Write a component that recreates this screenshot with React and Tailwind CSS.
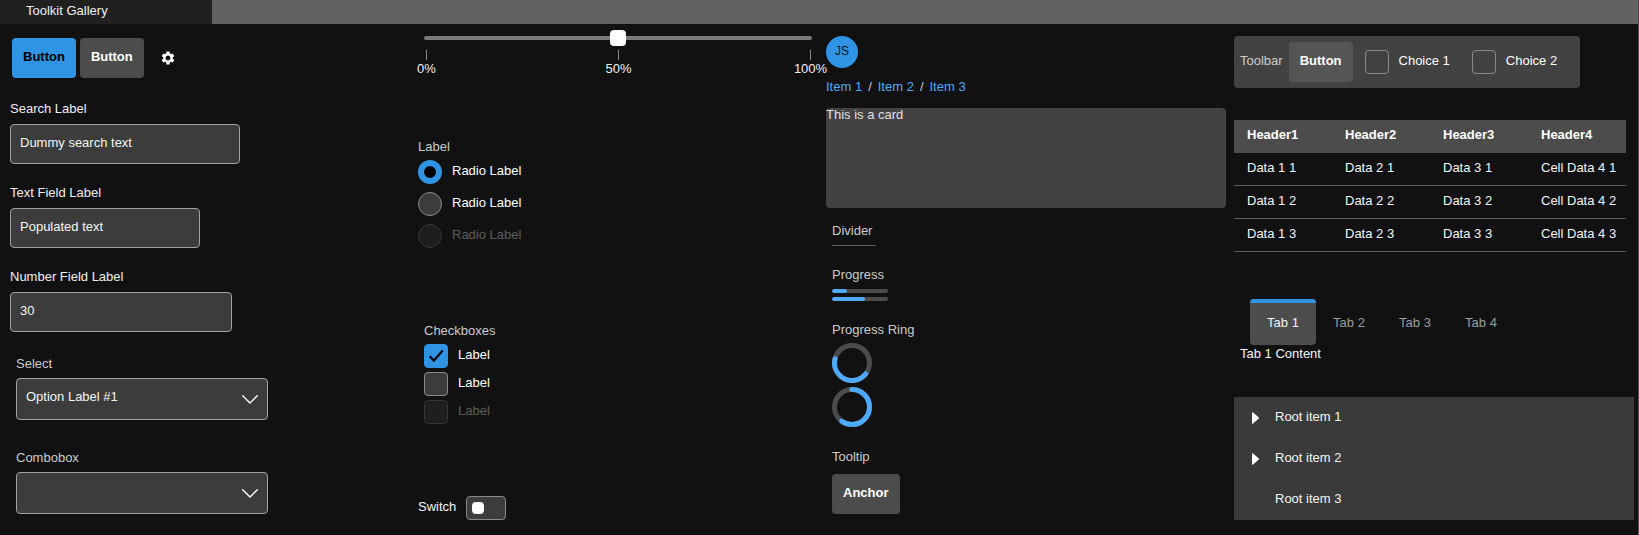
import { useId, useState } from "react";

const FIELD =
  "rounded border border-[#a3a3a3] bg-[#3c3c3c] px-[9px] pb-1 text-[#f5f5f5] outline-none";

function Button({ primary, toolbar, children }) {
  const tone = primary
    ? "bg-[#3094e4] text-black"
    : toolbar
      ? "bg-[#555555] text-white"
      : "bg-[#4c4c4c] text-white";
  return (
    <button type="button" className={`h-10 rounded px-[11px] pb-[2px] font-bold ${tone}`}>
      {children}
    </button>
  );
}

function TextField({ label, width, ...rest }) {
  const id = useId();
  return (
    <div className="flex flex-col items-start gap-[7px]">
      <label htmlFor={id} className="text-[#f0f0f0]">{label}</label>
      <input id={id} className={`h-10 max-w-full ${width} ${FIELD}`} {...rest} />
    </div>
  );
}

function Chevron() {
  return (
    <svg viewBox="0 0 16 9" className="pointer-events-none col-start-1 row-start-1 mr-[10px] h-[9px] w-4 self-center justify-self-end" fill="none" stroke="#fff" strokeWidth="1.4" strokeLinecap="round" strokeLinejoin="round" aria-hidden="true">
      <path d="M.7.8 8 8.1 15.300.8" />
    </svg>
  );
}

function Check({ label, light, ...rest }) {
  return (
    <label className={`flex items-center gap-[10px] ${rest.disabled ? "opacity-30" : ""}`}>
      <span className="grid">
        <input
          type="checkbox"
          className={`peer col-start-1 row-start-1 size-6 appearance-none rounded border border-[#8a8a8a] checked:border-[#3094e4] checked:bg-[#3094e4] ${light ? "" : "bg-[#3c3c3c]"}`}
          {...rest}
        />
        <svg viewBox="0 0 24 24" className="pointer-events-none invisible col-start-1 row-start-1 size-6 peer-checked:visible" fill="none" stroke="#000" strokeWidth="2.2" aria-hidden="true">
          <path d="M5.700 12.200 9.900 16.600 18.700 6.600" />
        </svg>
      </span>
      <span className="pb-[2px] text-white">{label}</span>
    </label>
  );
}

function Radio({ label, ...rest }) {
  return (
    <label className={`flex items-center gap-[10px] ${rest.disabled ? "opacity-30" : ""}`}>
      <input
        type="radio"
        name="radio-group"
        className="size-6 appearance-none rounded-full border border-[#8a8a8a] bg-[#3c3c3c] checked:border-[6px] checked:border-[#3094e4] checked:bg-black"
        {...rest}
      />
      <span className="pb-[2px] text-white">{label}</span>
    </label>
  );
}

function Bar({ value, label }) {
  return (
    <div role="progressbar" aria-label={label} aria-valuenow={value} className="h-1 w-14 overflow-hidden rounded-full bg-[#4c4c4c]">
      <div className="h-full rounded-full bg-[#4daafc]" style={{ width: `${value}%` }} />
    </div>
  );
}

function Ring({ value, start, label }) {
  return (
    <svg role="progressbar" aria-label={label} aria-valuenow={value} viewBox="0 0 40 40" className="size-10" fill="none" strokeWidth="5">
      <circle cx="20" cy="20" r="17.500" stroke="#4c4c4c" />
      <circle cx="20" cy="20" r="17.500" stroke="#4daafc" strokeLinecap="round" pathLength="100" strokeDasharray={`${value} 100`} transform={`rotate(${start} 20 20)`} />
    </svg>
  );
}

function InputsColumn() {
  return (
    <div className="flex min-w-0 flex-col">
      <div className="mt-[14px] ml-[2px] flex items-center gap-1">
        <Button primary>Button</Button>
        <Button>Button</Button>
        <button type="button" aria-label="Settings" className="flex size-10 items-center justify-center">
          <svg viewBox="0 0 24 24" className="size-4" fill="#fff" aria-hidden="true">
            <path d="M19.140 12.940c.04-.3.06-.61.06-.94 0-.32-.02-.64-.07-.94l2.030-1.580c.18-.14.23-.41.12-.61l-1.920-3.320c-.12-.22-.37-.29-.59-.22l-2.390.96c-.5-.38-1.030-.7-1.620-.94l-.36-2.540c-.04-.24-.24-.41-.48-.41h-3.840c-.24 0-.43.17-.47.41l-.36 2.540c-.59.24-1.130.57-1.620.94l-2.390-.96c-.22-.08-.47 0-.59.22L2.740 8.870c-.12.21-.08.47.12.61l2.030 1.580c-.05.3-.09.63-.09.94s.02.64.07.94l-2.030 1.580c-.18.14-.23.41-.12.61l1.920 3.320c.12.22.37.29.59.22l2.390-.96c.5.38 1.030.7 1.620.94l.36 2.540c.05.24.24.41.48.41h3.840c.24 0 .44-.17.47-.41l.36-2.540c.59-.24 1.130-.56 1.620-.94l2.390.96c.22.08.47 0 .59-.22l1.920-3.320c.12-.22.07-.47-.12-.61l-2.010-1.580zM12 15.600c-1.980 0-3.600-1.620-3.600-3.600s1.620-3.600 3.600-3.600 3.600 1.620 3.600 3.600-1.620 3.600-3.600 3.600z" />
          </svg>
        </button>
      </div>
      <div className="mt-[23px] flex flex-col gap-[21px]">
        <TextField label="Search Label" type="text" defaultValue="Dummy search text" width="w-[230px]" />
        <TextField label="Text Field Label" type="text" defaultValue="Populated text" width="w-[190px]" />
        <TextField label="Number Field Label" type="text" inputMode="numeric" defaultValue="30" width="w-[222px]" />
      </div>
      <div className="mt-6 ml-[6px] flex flex-col items-start gap-[6px]">
        <label htmlFor="select" className="text-[#cccccc]">Select</label>
        <div className="grid w-[252px] max-w-full">
          <select id="select" className={`col-start-1 row-start-1 h-[42px] appearance-none ${FIELD}`}>
            <option>Option Label #1</option>
          </select>
          <Chevron />
        </div>
      </div>
      <div className="mt-[30px] ml-[6px] flex flex-col items-start gap-[6px]">
        <label htmlFor="combobox" className="text-[#cccccc]">Combobox</label>
        <div className="grid w-[252px] max-w-full">
          <input id="combobox" role="combobox" aria-expanded="false" className={`col-start-1 row-start-1 h-[42px] ${FIELD}`} />
          <Chevron />
        </div>
      </div>
    </div>
  );
}

function ChoicesColumn() {
  return (
    <div className="flex min-w-0 flex-col">
      <div className="mt-[6px] mr-[6px] ml-[6px]">
        <input
          type="range"
          aria-label="Percentage"
          defaultValue="50"
          className="block h-4 w-full appearance-none bg-transparent [&::-webkit-slider-runnable-track]:h-1 [&::-webkit-slider-runnable-track]:rounded-full [&::-webkit-slider-runnable-track]:bg-[#7a7a7a] [&::-webkit-slider-thumb]:-mt-[6px] [&::-webkit-slider-thumb]:size-4 [&::-webkit-slider-thumb]:appearance-none [&::-webkit-slider-thumb]:rounded [&::-webkit-slider-thumb]:bg-white"
        />
        <div className="mt-1 mr-px ml-[2px] flex justify-between text-[#f0f0f0]">
          {["0%", "50%", "100%"].map((mark) => (
            <div key={mark} className="flex w-px flex-col items-center gap-px">
              <div className="h-[10px] w-px bg-[#8a8a8a]" />
              <span>{mark}</span>
            </div>
          ))}
        </div>
      </div>
      <fieldset className="mt-[62px] flex flex-col">
        <legend className="mb-[5px] text-[#cccccc]">Label</legend>
        <div className="flex flex-col items-start gap-2">
          <Radio label="Radio Label" defaultChecked />
          <Radio label="Radio Label" />
          <Radio label="Radio Label" disabled />
        </div>
      </fieldset>
      <fieldset className="mt-[75px] ml-[6px]">
        <legend className="mb-[5px] text-[#cccccc]">Checkboxes</legend>
        <div className="flex flex-col items-start gap-1">
          <Check label="Label" defaultChecked />
          <Check label="Label" />
          <Check label="Label" disabled />
        </div>
      </fieldset>
      <label className="mt-[72px] flex items-center gap-[10px] self-start text-[#f5f5f5]">
        <span className="pb-[2px]">Switch</span>
        <span className="grid items-center">
          <input type="checkbox" role="switch" className="peer col-start-1 row-start-1 h-6 w-10 appearance-none rounded border border-[#8a8a8a] bg-[#3c3c3c] checked:bg-[#3094e4]" />
          <span className="pointer-events-none col-start-1 row-start-1 ml-[6px] size-3 rounded bg-white peer-checked:ml-[22px]" />
        </span>
      </label>
    </div>
  );
}

function DisplayColumn() {
  return (
    <div className="flex min-w-0 flex-col items-start text-[#cccccc]">
      <div className="mt-3 flex size-8 items-center justify-center rounded-full bg-[#3094e4] pb-[2px] text-xs text-[#111111]">JS</div>
      <nav aria-label="Breadcrumb" className="mt-[11px]">
        <ol className="flex gap-[6px]">
          {["Item 1", "Item 2", "Item 3"].map((item, i) => (
            <li key={item} className="flex gap-[6px]">
              {i > 0 && <span className="text-[#cccccc]">/</span>}
              <a href="#" className="text-[#4daafc]">{item}</a>
            </li>
          ))}
        </ol>
      </nav>
      <div className="mt-[13px] h-[100px] w-full rounded bg-[#424242] leading-[14px] text-[#e0e0e0]">This is a card</div>
      <div className="ml-[6px] flex flex-col items-start">
        <div className="mt-[15px] w-11 border-b border-[#5a5a5a] pb-[6px]">Divider</div>
        <div className="mt-[21px]">Progress</div>
        <div className="mt-[6px] flex flex-col gap-1">
          <Bar value={27} label="Progress 1" />
          <Bar value={59} label="Progress 2" />
        </div>
        <div className="mt-[21px]">Progress Ring</div>
        <div className="mt-[5px] flex flex-col gap-1">
          <Ring value={43} start={39} label="Progress ring 1" />
          <Ring value={60} start={-90} label="Progress ring 2" />
        </div>
        <div className="mt-[22px] mb-[9px]">Tooltip</div>
        <Button>Anchor</Button>
      </div>
    </div>
  );
}

function DataColumn() {
  const [tab, setTab] = useState(1);
  return (
    <div className="flex min-w-0 flex-col">
      <div role="toolbar" aria-label="Toolbar" className="mt-3 flex h-[52px] items-center self-start rounded bg-[#424242] pr-[23px] pl-[6px]">
        <span className="mr-[6px] pb-[2px] text-[#cccccc]">Toolbar</span>
        <Button toolbar>Button</Button>
        <div className="ml-3 flex gap-[22px]">
          <Check label="Choice 1" light />
          <Check label="Choice 2" light />
        </div>
      </div>
      <div className="mt-8 pr-2">
        <table className="w-full table-fixed border-separate border-spacing-0 text-left text-[#f5f5f5]">
          <thead>
            <tr className="h-[33px] bg-[#4c4c4c]">
              {[1, 2, 3, 4].map((n) => (
                <th key={n} className="p-0 pb-1 pl-[13px] font-bold text-white">Header{n}</th>
              ))}
            </tr>
          </thead>
          <tbody>
            {[1, 2, 3].map((r) => (
              <tr key={r} className="h-[33px]">
                {[1, 2, 3, 4].map((n) => (
                  <td key={n} className="border-b border-[#5a5a5a] p-0 pb-[2px] pl-[13px]">{n === 4 ? "Cell Data" : "Data"} {n} {r}</td>
                ))}
              </tr>
            ))}
          </tbody>
        </table>
      </div>
      <div role="tablist" className="mt-[47px] ml-4 flex">
        {[1, 2, 3, 4].map((n) => (
          <button
            key={n}
            type="button"
            role="tab"
            aria-selected={tab === n}
            onClick={() => setTab(n)}
            className={`flex h-[46px] w-[66px] flex-col overflow-hidden rounded ${tab === n ? "bg-[#4c4c4c] text-[#f5f5f5]" : "text-[#9d9d9d]"}`}
          >
            <span className={`h-1 w-full ${tab === n ? "bg-[#3094e4]" : ""}`} />
            <span className="mt-3 w-full text-center">Tab {n}</span>
          </button>
        ))}
      </div>
      <div role="tabpanel" className="mt-px ml-[6px] text-[#f5f5f5]">Tab {tab} Content</div>
      <ul role="tree" aria-label="Items" className="mt-[35px] bg-[#3a3a3a] text-[#f5f5f5]">
        {[1, 2, 3].map((n) => (
          <li key={n} role="treeitem" className="flex h-[41px] items-center pl-[18px]">
            <span className="w-[23px]">
              {n < 3 && (
                <svg viewBox="0 0 7 12" className="h-3 w-[7px]" fill="#fff" aria-hidden="true">
                  <path d="M0 .6Q0 0 .8.300L6.600 5.300Q7.200 6 6.600 6.700L.8 11.700Q0 12 0 11.400Z" />
                </svg>
              )}
            </span>
            <span className="pb-px">Root item {n}</span>
          </li>
        ))}
      </ul>
    </div>
  );
}

export default function App() {
  return (
    <div className="min-h-screen border-r border-[#505050] bg-[#111111] font-['Liberation_Sans',Arial,sans-serif] text-[13px] leading-4">
      <header className="flex h-6 bg-[#616161]">
        <div className="w-[212px] bg-[#202020] pt-[3px] pl-[26px] text-[#f0f0f0]">Toolkit Gallery</div>
      </header>
      <main className="grid grid-cols-4 gap-2 pr-1 pl-[10px]">
        <InputsColumn />
        <ChoicesColumn />
        <DisplayColumn />
        <DataColumn />
      </main>
    </div>
  );
}
